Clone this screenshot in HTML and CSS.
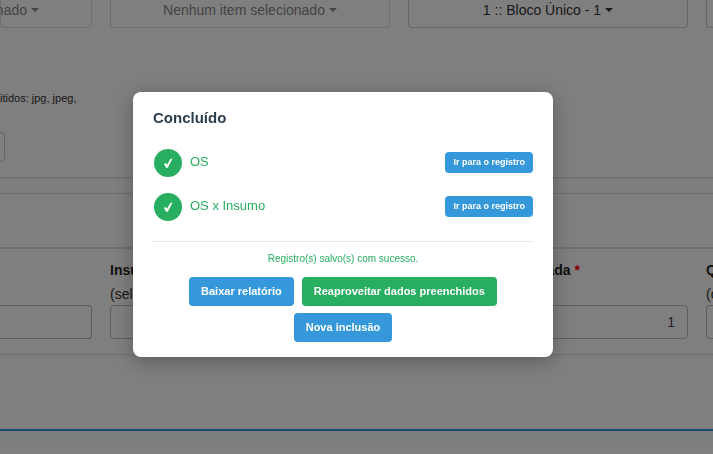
FILE: index.html
```
<!DOCTYPE html>
<html lang="pt-BR">
<head>
<meta charset="utf-8">
<meta name="viewport" content="width=device-width, initial-scale=1">
<title>Concluído</title>
<link rel="stylesheet" href="styles.css">
</head>
<body>
<main class="page">
  <section class="panel panel-top">
    <div class="columns">
      <button type="button" class="picker muted open-left">selecionado <span class="caret"></span></button>
      <button type="button" class="picker muted">Nenhum item selecionado <span class="caret"></span></button>
      <button type="button" class="picker">1 :: Bloco Único - 1 <span class="caret"></span></button>
      <button type="button" class="picker open-right" aria-label="Selecionar"></button>
    </div>
    <p class="hint">itidos: jpg, jpeg,</p>
    <button type="button" class="upload" aria-label="Arquivo"></button>
  </section>
  <section class="panel">
    <div class="panel-head"></div>
    <div class="columns panel-body">
      <div class="field"><input class="box open-left" type="text" aria-label="Campo"></div>
      <div class="field">
        <label for="insumo">Insumo</label>
        <small>(selecione)</small>
        <input class="box" id="insumo" type="text">
      </div>
      <div class="field">
        <label for="usada">Quantidade Programada <span class="required">*</span></label>
        <input class="box number" id="usada" type="text" value="1">
      </div>
      <div class="field">
        <label for="qtd">Qtd</label>
        <small>(calc)</small>
        <input class="box open-right" id="qtd" type="text">
      </div>
    </div>
  </section>
  <footer class="footer"></footer>
</main>

<div class="overlay">
  <div class="modal" role="dialog" aria-modal="true" aria-labelledby="title">
    <h2 class="title" id="title">Concluído</h2>
    <ul class="results">
      <li class="result">
        <span class="badge"><svg viewBox="0 0 12 12" aria-hidden="true"><path d="M1 6.6 3.2 5.4 4.5 7.4 8 1.2 10.4 .6 5.4 10.4 3.6 10.8Z"/></svg></span>
        <span class="name">OS</span>
        <button type="button" class="btn small">Ir para o registro</button>
      </li>
      <li class="result">
        <span class="badge"><svg viewBox="0 0 12 12" aria-hidden="true"><path d="M1 6.6 3.2 5.4 4.5 7.4 8 1.2 10.4 .6 5.4 10.4 3.6 10.8Z"/></svg></span>
        <span class="name">OS x Insumo</span>
        <button type="button" class="btn small">Ir para o registro</button>
      </li>
    </ul>
    <p class="message">Registro(s) salvo(s) com sucesso.</p>
    <div class="actions">
      <button type="button" class="btn">Baixar relatório</button>
      <button type="button" class="btn success">Reaproveitar dados preenchidos</button>
      <button type="button" class="btn">Nova inclusão</button>
    </div>
  </div>
</div>
</body>
</html>
```
FILE: styles.css
```
* { box-sizing: border-box; }

body {
  margin: 0;
  background: #fff;
  color: #333;
  font: 14px/20px "Liberation Sans", Arial, sans-serif;
  overflow: hidden;
}

button, input { font: inherit; color: inherit; }

.page { display: flex; flex-direction: column; }

.panel {
  border: solid #ddd;
  border-width: 1px 0;
  box-shadow: 0 1px 4px rgba(0, 0, 0, .08);
  margin-bottom: 15px;
}

.panel-top { border-top: 0; padding-bottom: 15px; }

.columns {
  display: grid;
  grid-template-columns: 92px 1fr 1fr 7px;
  column-gap: 18px;
}

.picker {
  display: flex;
  align-items: center;
  justify-content: center;
  gap: 4px;
  height: 28px;
  padding: 0 0 7px;
  border: 1px solid #ccc;
  border-top: 0;
  border-radius: 0 0 4px 4px;
  background: #fff;
  white-space: nowrap;
  min-width: 0;
}

.muted { color: #888; border-color: #ddd; }

.picker.open-left { justify-content: flex-end; padding-right: 52px; }

.caret {
  border: 4px solid transparent;
  border-top-color: currentColor;
  border-bottom: 0;
}

.hint { margin: 62px 0 26px; font-size: 11px; line-height: 16px; }

.upload {
  display: block;
  width: 5px;
  height: 30px;
  padding: 0;
  border: 1px solid #ccc;
  border-left: 0;
  border-radius: 0 4px 4px 0;
  background: #fff;
}

.panel-head { height: 55px; border-bottom: 2px solid #ddd; }

.panel-body { padding: 11px 0 15px; }

.field {
  display: flex;
  flex-direction: column;
  height: 79px;
  min-width: 0;
  white-space: nowrap;
  overflow: hidden;
}

.field label { font-weight: bold; color: #222; }

.field small { margin-top: 4px; font-size: 14px; }

.required { color: #f00; }

.box {
  width: 100%;
  height: 34px;
  margin-top: auto;
  flex: none;
  padding: 6px 12px;
  border: 1px solid #bbb;
  border-radius: 4px;
  background: #fff;
}

.number { text-align: right; color: #446; }

.box.open-left { border-left: 0; border-radius: 0 4px 4px 0; }

.open-right { border-right: 0; padding: 0; }

.picker.open-right { border-radius: 0 0 0 4px; }

.box.open-right { border-radius: 4px 0 0 4px; }

.footer {
  height: 40px;
  margin-top: 59px;
  border-top: 2px solid #3498db;
  background: linear-gradient(#f3f9fc, #fff 14px);
}

.overlay {
  position: fixed;
  inset: 0;
  display: flex;
  align-items: center;
  justify-content: center;
  padding: 0 27px 5px 0;
  background: rgba(0, 0, 0, .5);
}

.modal {
  width: 420px;
  max-width: 90%;
  padding: 17px 20px 15px;
  border-radius: 8px;
  background: #fff;
  box-shadow: 0 4px 20px rgba(0, 0, 0, .3);
}

.title { margin: 0 0 14px; font-size: 15px; line-height: 18px; color: #2c3e50; }

.results { margin: 0; padding: 0 0 12px; list-style: none; border-bottom: 1px solid #e5e5e5; }

.result { display: flex; align-items: center; gap: 8px; padding: 8px 0 8px 1px; }

.badge {
  display: grid;
  place-items: center;
  width: 28px;
  height: 28px;
  border-radius: 50%;
  background: #27ae60;
}

.badge svg { width: 11px; height: 11px; fill: #fff; }

.name { flex: 1; padding-bottom: 3px; font-size: 13px; line-height: 16px; color: #27ae60; }

.message { margin: 10px 0 11px; font-size: 10px; line-height: 14px; text-align: center; color: #27ae60; }

.actions { display: flex; flex-wrap: wrap; justify-content: center; gap: 7px 8px; }

.btn {
  padding: 8px 12px;
  border: 0;
  border-radius: 4px;
  background: #3498db;
  color: #fff;
  font-size: 11px;
  line-height: 13px;
  font-weight: bold;
  white-space: nowrap;
}

.success { background: #27ae60; }

.small { margin-bottom: 2px; padding: 4px 8px; font-size: 9px; }
```
